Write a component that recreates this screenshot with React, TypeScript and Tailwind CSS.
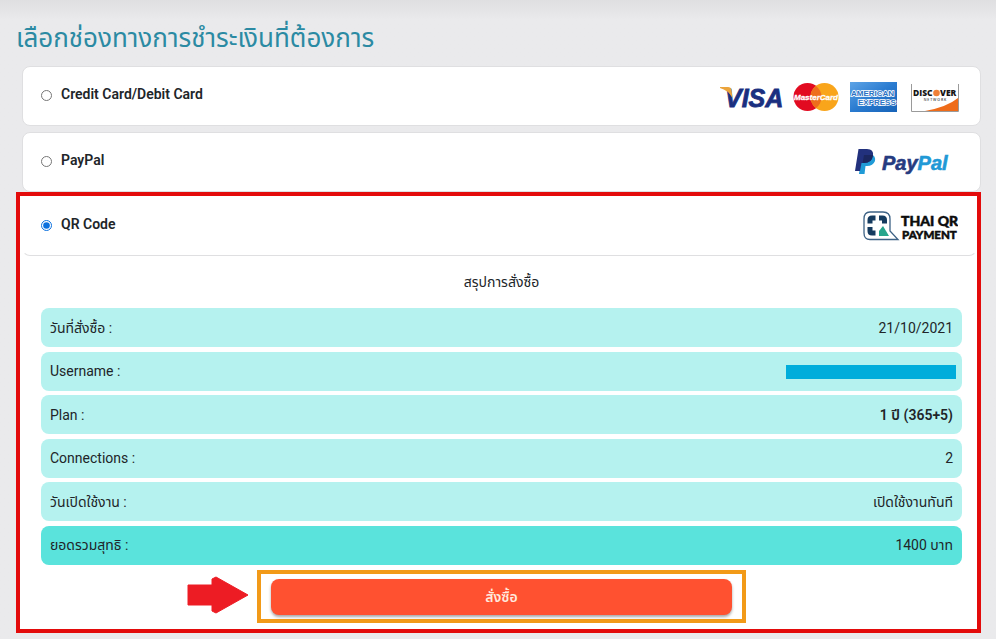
import { ReactNode } from 'react'

interface MethodProps {
  id: string
  label: string
  checked?: boolean
  children: ReactNode
}

interface Row {
  label: string
  value: string
  bold?: boolean
  total?: boolean
}

const rows: Row[] = [
  { label: 'วันที่สั่งซื้อ :', value: '21/10/2021' },
  { label: 'Username :', value: '' },
  { label: 'Plan :', value: '1 ปี (365+5)', bold: true },
  { label: 'Connections :', value: '2' },
  { label: 'วันเปิดใช้งาน :', value: 'เปิดใช้งานทันที' },
  { label: 'ยอดรวมสุทธิ :', value: '1400 บาท', total: true },
]

function VisaLogo() {
  return (
    <svg width="64" height="28" viewBox="0 0 64 28" className="overflow-visible" role="img" aria-label="Visa">
      <text x="7" y="24" fill="#1a2f80" stroke="#1a2f80" strokeWidth="0.800" fontFamily="Liberation Sans" fontWeight="700" fontStyle="italic" fontSize="25">VISA</text>
      <path d="M2 4H10Q13 4 13.500 7L14.500 15Q10 7 2 5Z" fill="#eba43c" />
    </svg>
  )
}

function MasterCardLogo() {
  return (
    <svg width="46" height="30" viewBox="0 0 46 30" role="img" aria-label="MasterCard">
      <circle cx="14.500" cy="15" r="14" fill="#e20b21" />
      <circle cx="31.500" cy="15" r="14" fill="#f9a51b" />
      <path d="M23 3.900A14 14 0 0 1 23 26.100A14 14 0 0 1 23 3.900" fill="#ee6d1c" />
      <text x="23" y="18" textAnchor="middle" fill="#fff" stroke="#fff" strokeWidth="0.300" fontFamily="Liberation Sans" fontWeight="700" fontStyle="italic" fontSize="8">MasterCard</text>
    </svg>
  )
}

function AmexLogo() {
  return (
    <svg width="47" height="30" viewBox="0 0 47 30" className="mr-[3px]" role="img" aria-label="American Express">
      <defs>
        <linearGradient id="amex" x1="0" y1="0" x2="1" y2="1">
          <stop offset="0" stopColor="#5ea4e6" />
          <stop offset="0.500" stopColor="#2a7bd0" />
          <stop offset="1" stopColor="#1763b8" />
        </linearGradient>
      </defs>
      <rect width="47" height="30" fill="url(#amex)" />
      <g fill="#2a72c4" stroke="#fff" strokeWidth="1.600" paintOrder="stroke" fontFamily="Liberation Sans" fontWeight="700" fontSize="8">
        <text x="1" y="13.500">AMERICAN</text>
        <text x="8" y="22.500">EXPRESS</text>
      </g>
    </svg>
  )
}

function DiscoverLogo() {
  return (
    <svg width="48" height="30" viewBox="0 0 48 30" role="img" aria-label="Discover Network">
      <rect x="0.500" y="0.500" width="47" height="29" fill="#fff" />
      <path d="M47 16V29H14Q36 25 47 16Z" fill="#ef6c1a" />
      <path d="M0.500 2V29.500H47.500V2" fill="none" stroke="#9a9a9a" />
      <text x="2" y="14" fill="#161616" fontFamily="Open Sans" fontWeight="800" fontSize="8.500">DISC</text>
      <circle cx="25.500" cy="11" r="3.300" fill="#f08038" />
      <text x="29" y="14" fill="#161616" fontFamily="Open Sans" fontWeight="800" fontSize="8.500">VER</text>
      <text x="24" y="18.500" textAnchor="middle" fill="#444" fontFamily="Open Sans" fontWeight="600" fontSize="3.500">N E T W O R K</text>
    </svg>
  )
}

function PayPalLogo() {
  return (
    <svg width="95" height="28" viewBox="0 0 95 28" role="img" aria-label="PayPal">
      <path d="M7 6H16Q21 8 20 13Q18 18 12 18H10.500L9.500 26H4Z" fill="#1f9bd7" />
      <path d="M3.500 1H12Q19 1 18 8Q16.500 15 9 15H6.500L5 23H0Z" fill="#22317d" />
      <path d="M9 7H18Q17 15 9 15H7.600Z" fill="#1b2760" />
      <text x="27" y="22" fontFamily="Liberation Sans" fontWeight="700" fontStyle="italic" fontSize="20" strokeWidth="0.600">
        <tspan fill="#263b80" stroke="#263b80">Pay</tspan><tspan fill="#2199d6" stroke="#2199d6">Pal</tspan>
      </text>
    </svg>
  )
}

function ThaiQrLogo() {
  return (
    <svg width="95" height="30" viewBox="0 0 95 30" role="img" aria-label="Thai QR Payment">
      <path d="M7 1H20Q27 1 27 8V20L35 28.500H7Q1 28.500 1 22V8Q1 1 7 1Z" fill="#fff" stroke="#3d6285" strokeWidth="1.300" />
      <g fill="none" stroke="#153b5f" strokeWidth="5">
        <path d="M7 12.500V9Q7 7 9 7H12.500" />
        <path d="M16 7H19.500Q21.500 7 21.500 9V12.500" />
        <path d="M7 16V20Q7 22 9 22H12.500" />
      </g>
      <path d="M16 25V20L20 15L26 25Z" fill="#27a58c" />
      <g fill="#0c0c0c" stroke="#0c0c0c" strokeWidth="0.500" fontFamily="Lato" fontWeight="900">
        <text x="38" y="15" fontSize="14">THAI QR</text>
        <text x="39" y="28" fontSize="11.500">PAYMENT</text>
      </g>
    </svg>
  )
}

function Method({ id, label, checked, children }: MethodProps) {
  return (
    <div
      className={`flex items-center justify-between w-full min-h-[60px] px-[18px] bg-white border rounded-lg ${checked ? 'border-transparent border-b-[#dfdfe1]' : 'border-[#dfdfe1]'}`}
    >
      <label htmlFor={id} className="flex items-center gap-[9px] text-sm leading-5 font-semibold pb-1">
        <input id={id} type="radio" name="method" defaultChecked={checked} className="size-[11px] mt-0.5 accent-[#0b70de]" />
        {label}
      </label>
      {children}
    </div>
  )
}

export default function App() {
  return (
    <main
      lang="th"
      className="min-h-screen pl-4 pr-[15px] pb-1.5 bg-[#eaeaec] bg-linear-to-b from-[#dfdfe1] to-[#eaeaec] to-[20px] text-[#212529] font-['Roboto','Noto_Sans','Noto_Sans_Thai',sans-serif]"
    >
      <h1 className="pt-[21px] pb-[11px] text-[26px] leading-[34px] text-[#2b8aa3]">เลือกช่องทางการชำระเงินที่ต้องการ</h1>

      <div className="flex flex-col gap-1.5 pl-1.5">
        <Method id="card" label="Credit Card/Debit Card">
          <div className="flex items-center gap-[11px] pt-0.5 pr-[3px]">
            <VisaLogo />
            <MasterCardLogo />
            <AmexLogo />
            <DiscoverLogo />
          </div>
        </Method>
        <Method id="paypal" label="PayPal">
          <div className="pr-3">
            <PayPalLogo />
          </div>
        </Method>
      </div>

      {/* Selected method */}
      <section className="border-4 border-[#e30b0b] bg-white pl-0.5 pb-1.5">
        <Method id="qr" label="QR Code" checked>
          <ThaiQrLogo />
        </Method>

        <div className="pl-[19px] pr-[15px]">
          <h2 className="py-3.5 text-center text-sm leading-6">สรุปการสั่งซื้อ</h2>

          <dl className="flex flex-col justify-between min-h-[257px] text-sm leading-5">
            {rows.map((r) => (
              <div
                key={r.label}
                className={`relative flex items-center justify-between min-h-[39px] px-[9px] rounded-lg ${r.total ? 'bg-[#5ae3dc]' : 'bg-[#b5f2ef]'}`}
              >
                <dt>{r.label}</dt>
                <dd className={r.bold ? 'font-semibold' : ''}>
                  {r.value || <span className="absolute right-1.5 top-[13px] w-[170px] h-3.5 bg-[#00addb]" />}
                </dd>
              </div>
            ))}
          </dl>

          <div className="relative w-[53%] mx-auto mt-[5px] px-2.5 pt-[5px] pb-1 border-4 border-[#f29a18]">
            <button
              type="button"
              className="block w-full h-9 rounded-lg bg-[#ff5130] text-[#ffe9dd] text-sm font-semibold shadow-[0_2px_3px_rgba(0,0,0,0.35)]"
            >
              สั่งซื้อ
            </button>
            <svg width="62" height="38" viewBox="0 0 62 38" className="absolute right-full top-0.5 mr-3" aria-hidden="true">
              <path d="M1 9H25V3L29 1L61 19L29 37L25 35V29H1Z" fill="#ed1c24" stroke="#ed1c24" strokeLinejoin="round" />
            </svg>
          </div>
        </div>
      </section>
    </main>
  )
}
